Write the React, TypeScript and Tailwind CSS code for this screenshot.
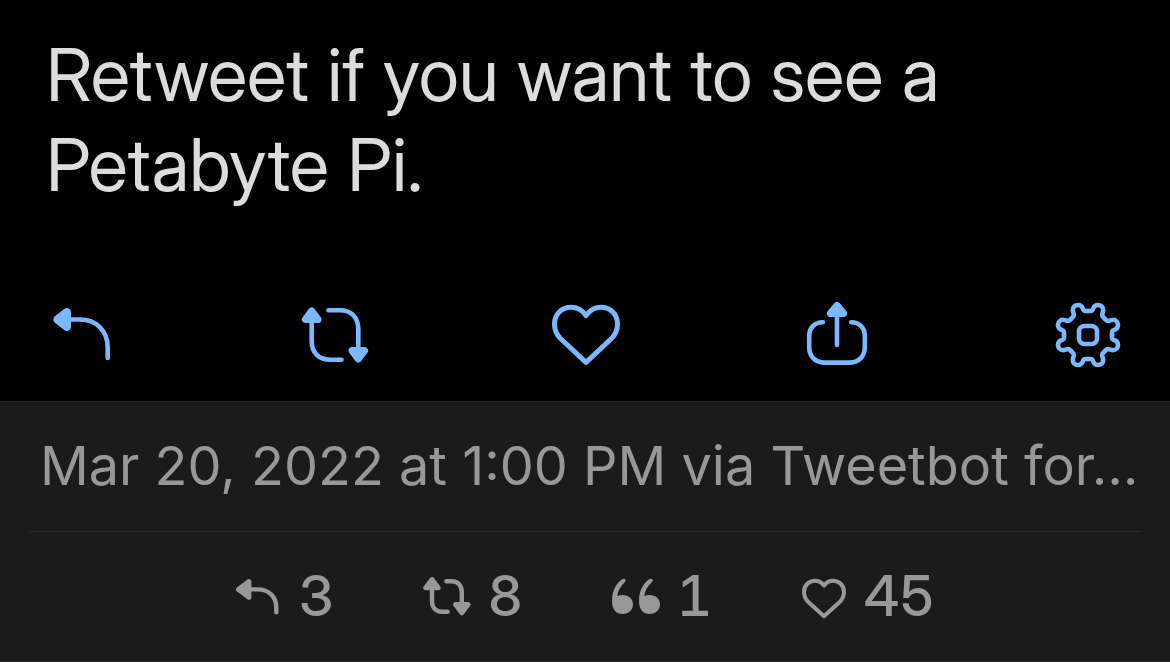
import type { ReactNode } from "react";

const ReplyIcon = () => (
  <svg viewBox="0 0 72 72" className="size-18" fill="none" stroke="currentColor" strokeLinecap="round" strokeLinejoin="round" aria-hidden="true">
    <path d="M9.5 20.5 18.8 13.2V27.8Z" fill="currentColor" strokeWidth="8.4" />
    <path d="M20 20.5H32C48.5 20.5 59.7 32 59.7 48.5V59" strokeWidth="4.6" />
  </svg>
);

const RetweetIcon = () => (
  <svg viewBox="0 0 72 72" className="size-18" fill="none" stroke="currentColor" strokeLinecap="round" strokeLinejoin="round" aria-hidden="true">
    <path d="M12.7 12.2 6.6 20.4H18.8Z" fill="currentColor" strokeWidth="7.4" />
    <path d="M12.7 20V42C12.7 53.5 19.5 60.7 31 60.7H42.5" strokeWidth="4.6" />
    <path d="M59.3 59.8 65.4 51.6H53.2Z" fill="currentColor" strokeWidth="7.4" />
    <path d="M59.3 52V30C59.3 18.5 52.5 11.3 41 11.3H29.5" strokeWidth="4.6" />
  </svg>
);

const HeartIcon = () => (
  <svg viewBox="0 -1 72 72" className="size-18" fill="none" stroke="currentColor" strokeWidth="5" aria-hidden="true">
    <path d="M36 15.5C32 10 27 7.3 21 7.3 11.5 7.3 4.5 14.5 4.5 24 4.5 30 6.5 34.5 10.5 38.5L36 62.4 61.5 38.5C65.5 34.5 67.5 30 67.5 24 67.5 14.5 60.5 7.3 51 7.3 45 7.3 40 10 36 15.5Z" strokeLinejoin="round" />
  </svg>
);

const ShareIcon = () => (
  <svg viewBox="0 0 72 72" className="size-18" fill="none" stroke="currentColor" strokeLinecap="round" strokeLinejoin="round" aria-hidden="true">
    <path d="M36 6.6 29.6 14.3H42.4Z" fill="currentColor" strokeWidth="7.4" />
    <path d="M36 16V46M21.8 23.3C13.5 23.3 8.2 29 8.2 37V48C8.2 57 14 63.6 23 63.6H49C58 63.6 63.8 57 63.8 48V37C63.8 29 58.5 23.3 50.2 23.3" strokeWidth="4.6" />
  </svg>
);

const gearQuarter =
  "M36 12H38.5C40.5 12 40.8 10.8 41.2 9.5 42 7.3 43.8 6 46 6 49 6 51.2 8.3 51.2 11 51.2 12.3 50.7 13.3 50.3 14.6 49.8 16.5 50.2 17.2 51.2 18.2L53.8 20.8C54.8 21.8 55.5 22.2 57.4 21.7 58.7 21.3 59.7 20.8 61 20.8 63.7 20.8 66 23 66 26 66 28.2 64.7 30 62.5 30.8 61.2 31.2 60 31.5 60 33.5V36";

const GearIcon = () => (
  <svg viewBox="0 0 72 72" className="size-18" fill="none" stroke="currentColor" strokeWidth="4.6" strokeLinecap="round" strokeLinejoin="round" aria-hidden="true">
    <path d={gearQuarter} />
    <path d={gearQuarter} transform="rotate(90 36 36)" />
    <path d={gearQuarter} transform="rotate(180 36 36)" />
    <path d={gearQuarter} transform="rotate(270 36 36)" />
    <rect x="27" y="27" width="18" height="18" rx="5.5" />
  </svg>
);

const SmallReply = () => (
  <svg viewBox="0 0 48 48" className="size-12" fill="none" stroke="currentColor" strokeLinecap="round" strokeLinejoin="round" aria-hidden="true">
    <path d="M4.5 17.4 14.9 9.6V25.2Z" fill="currentColor" strokeWidth="5" />
    <path d="M15.5 17.4H23.5C35 17.4 42.3 24.7 42.3 35.7V40.2" strokeWidth="4.4" />
  </svg>
);

const SmallRetweet = () => (
  <svg viewBox="0 0 48 48" className="size-12" fill="none" stroke="currentColor" strokeLinecap="round" strokeLinejoin="round" aria-hidden="true">
    <path d="M9 7.6 2.8 15.8H15.2Z" fill="currentColor" strokeWidth="5" />
    <path d="M9 16V29C9 35.5 12.7 39.8 19 39.8H24.6" strokeWidth="4.4" />
    <path d="M38.8 40.8 45 32.6H32.6Z" fill="currentColor" strokeWidth="5" />
    <path d="M38.8 32V20C38.8 13.5 35 9.2 28.8 9.2H23.4" strokeWidth="4.4" />
  </svg>
);

const SmallQuote = () => (
  <svg viewBox="0 0 48 48" className="size-12" fill="currentColor" aria-hidden="true">
    <path d="M0 29C0 19 4 11.5 10.2 7.3 11.6 6.3 13 6.5 13.5 7.5 14 8.6 13.5 9.6 12.5 10.6 8.5 14.6 5.8 19 5.3 24 6.8 23.3 8.6 23 10.5 23 16.5 23 21 26.8 21 32.3 21 38 16.5 42 10.7 42 4.2 42 0 37.5 0 29Z" />
    <path d="M27 29C27 19 31 11.5 37.2 7.3 38.6 6.3 40 6.5 40.5 7.5 41 8.6 40.5 9.6 39.5 10.6 35.5 14.6 32.8 19 32.3 24 33.8 23.3 35.6 23 37.5 23 43.5 23 48 26.8 48 32.3 48 38 43.5 42 37.7 42 31.2 42 27 37.5 27 29Z" />
  </svg>
);

const SmallHeart = () => (
  <svg viewBox="0 -1 46 48" className="h-12 w-[46px]" fill="none" stroke="currentColor" strokeWidth="4" strokeLinejoin="round" aria-hidden="true">
    <path d="M22 12.5C19.5 9.3 16.7 7.8 13 7.8 6.6 7.8 2 12.6 2 19 2 22.8 3.4 26 6.3 29L22 43.2 37.7 29C40.6 26 42 22.8 42 19 42 12.6 37.4 7.8 31 7.8 27.3 7.8 24.5 9.3 22 12.5Z" />
  </svg>
);

const actions: { label: string; icon: ReactNode }[] = [
  { label: "Reply", icon: <ReplyIcon /> },
  { label: "Retweet", icon: <RetweetIcon /> },
  { label: "Like", icon: <HeartIcon /> },
  { label: "Share", icon: <ShareIcon /> },
  { label: "Settings", icon: <GearIcon /> },
];

const stats: { label: string; count: number; icon: ReactNode }[] = [
  { label: "Replies", count: 3, icon: <SmallReply /> },
  { label: "Retweets", count: 8, icon: <SmallRetweet /> },
  { label: "Quotes", count: 1, icon: <SmallQuote /> },
  { label: "Likes", count: 45, icon: <SmallHeart /> },
];

export default function App() {
  return (
    <main className="flex min-h-screen flex-col bg-black font-['Inter_Display','Inter',sans-serif]">
      <article className="py-[30px]">
        <p className="max-w-[1040px] px-[46px] text-[73px] leading-[90px] text-[#dcdcdc]">
          Retweet if you want to see a Petabyte Pi.
        </p>
        <div className="mt-[89px] flex justify-between pr-[46px] pl-12 text-[#7ab8ff]">
          {actions.map(({ label, icon }) => (
            <button key={label} type="button" aria-label={label} className="cursor-pointer">
              {icon}
            </button>
          ))}
        </div>
      </article>
      <footer className="grow border-y border-[#2a2a2a] bg-[#1b1b1b] text-[56px] leading-16 text-[#989898]">
        <p className="overflow-hidden pt-8 pb-[33px] pl-10 font-['Inter',sans-serif] text-[54px] whitespace-nowrap">
          Mar 20, 2022 at 1:00 PM via Tweetbot for…
        </p>
        <ul className="mx-[29px] flex justify-center gap-[89px] border-t border-[#282828] pt-8 pb-[33px] font-medium tabular-nums">
          {stats.map(({ label, count, icon }) => (
            <li key={label} aria-label={label} className="flex items-center gap-4">
              {icon}
              <span>{count}</span>
            </li>
          ))}
        </ul>
      </footer>
    </main>
  );
}
